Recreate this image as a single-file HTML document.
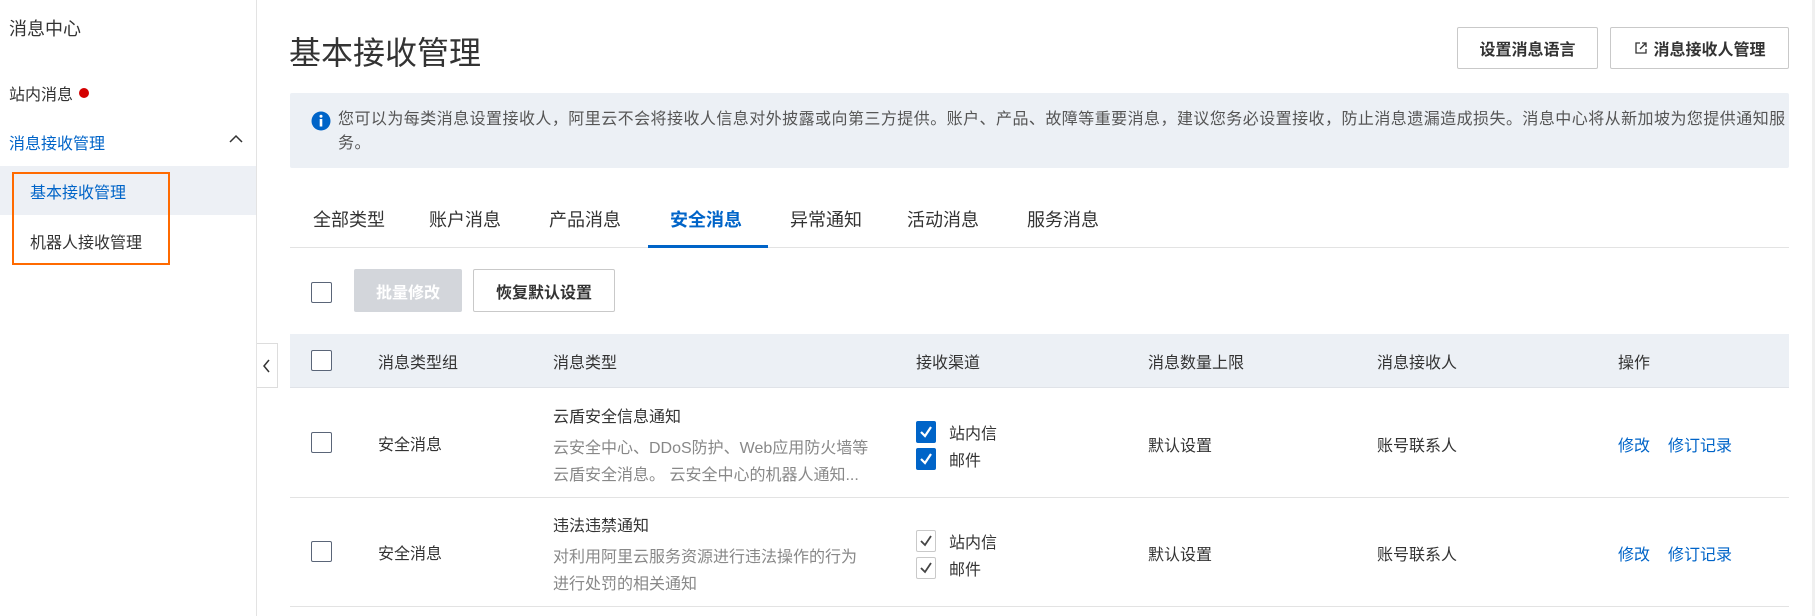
<!DOCTYPE html>
<html><head><meta charset="utf-8"><style>
*{margin:0;padding:0;box-sizing:border-box}
body{width:1815px;height:616px;overflow:hidden;background:#fff;font-family:"Liberation Sans","Noto Sans CJK SC",sans-serif;color:#333;position:relative;font-size:16px}
.a{position:absolute;white-space:nowrap}
.side{position:absolute;left:0;top:0;width:257px;height:616px;border-right:1px solid #e3e3e3;background:#fff}
.btn{position:absolute;border:1px solid #c9c9c9;border-radius:2px;background:#fff;font-size:16px;font-weight:bold;color:#333;display:flex;align-items:center;justify-content:center}
.cb{position:absolute;width:21px;height:21px;border:1.5px solid #5a6578;border-radius:2px;background:#fff}
.ck{position:absolute;width:20px;height:22px;border-radius:2px;background:#0064c8}
.ckg{position:absolute;width:20px;height:22px;border-radius:2px;border:1px solid #c9c9c9;background:#fff}
.blue{color:#0064c8}
.gray{color:#888}
</style></head><body>
<div class="side">
  <div class="a" style="left:9px;top:15px;font-size:18px;color:#333">消息中心</div>
  <div class="a" style="left:9px;top:81px;font-size:16px">站内消息</div>
  <div class="a" style="left:79px;top:88px;width:10px;height:10px;border-radius:50%;background:#d40000"></div>
  <div class="a blue" style="left:9px;top:130px;font-size:16px">消息接收管理</div>
  <svg class="a" style="left:228px;top:133px" width="16" height="12"><path d="M2 9 L8 3 L14 9" fill="none" stroke="#333" stroke-width="1.5"/></svg>
  <div class="a" style="left:0;top:166px;width:256px;height:49px;background:#edf0f5"></div>
  <div class="a blue" style="left:30px;top:179px;font-size:16px">基本接收管理</div>
  <div class="a" style="left:30px;top:229px;font-size:16px">机器人接收管理</div>
  <div class="a" style="left:12px;top:172px;width:158px;height:93px;border:2px solid #ff6a00"></div>
</div>
<div class="a" style="left:257px;top:343px;width:21px;height:45px;border:1px solid #ddd;border-left:none;background:#fff"></div>
<svg class="a" style="left:262px;top:359px" width="10" height="14"><path d="M7 1 L2 7 L7 13" fill="none" stroke="#333" stroke-width="1.5"/></svg>

<div class="a" style="left:289px;top:28px;font-size:32px;color:#333">基本接收管理</div>
<div class="btn" style="left:1457px;top:27px;width:141px;height:42px">设置消息语言</div>
<div class="btn" style="left:1610px;top:27px;width:179px;height:42px"><svg width="16" height="16" style="margin-right:4px"><path d="M7 3 H3 V13 H13 V9 M9 3 H13 V7 M13 3 L7 9" fill="none" stroke="#333" stroke-width="1.3"/></svg>消息接收人管理</div>

<div class="a" style="left:290px;top:93px;width:1499px;height:75px;background:#ecf0f5;border-radius:2px"></div>
<svg class="a" style="left:311px;top:111px" width="20" height="20"><circle cx="10" cy="10" r="9.5" fill="#0064c8"/><rect x="8.7" y="8" width="2.6" height="7.5" fill="#fff"/><circle cx="10" cy="5.3" r="1.5" fill="#fff"/></svg>
<div class="a" style="left:338px;top:108px;font-size:16px;line-height:24px;color:#555;letter-spacing:0.45px">您可以为每类消息设置接收人，阿里云不会将接收人信息对外披露或向第三方提供。账户、产品、故障等重要消息，建议您务必设置接收，防止消息遗漏造成损失。消息中心将从新加坡为您提供通知服<br>务。</div>

<div class="a" style="left:290px;top:247px;width:1499px;height:1px;background:#e3e3e3"></div>
<div class="a" style="left:313px;top:206px;font-size:18px">全部类型</div>
<div class="a" style="left:429px;top:206px;font-size:18px">账户消息</div>
<div class="a" style="left:549px;top:206px;font-size:18px">产品消息</div>
<div class="a blue" style="left:670px;top:206px;font-size:18px;font-weight:bold">安全消息</div>
<div class="a" style="left:790px;top:206px;font-size:18px">异常通知</div>
<div class="a" style="left:907px;top:206px;font-size:18px">活动消息</div>
<div class="a" style="left:1027px;top:206px;font-size:18px">服务消息</div>
<div class="a" style="left:648px;top:245px;width:120px;height:3px;background:#0064c8"></div>

<div class="cb" style="left:311px;top:282px"></div>
<div class="a" style="left:354px;top:269px;width:108px;height:43px;background:#d3d6db;border-radius:2px;color:#fff;font-weight:bold;display:flex;align-items:center;justify-content:center">批量修改</div>
<div class="btn" style="left:473px;top:269px;width:142px;height:43px">恢复默认设置</div>

<div class="a" style="left:290px;top:334px;width:1499px;height:54px;background:#ecf0f5;border-bottom:1px solid #e0e3e8"></div>
<div class="cb" style="left:311px;top:350px"></div>
<div class="a" style="left:378px;top:349px">消息类型组</div>
<div class="a" style="left:553px;top:349px">消息类型</div>
<div class="a" style="left:916px;top:349px">接收渠道</div>
<div class="a" style="left:1148px;top:349px">消息数量上限</div>
<div class="a" style="left:1377px;top:349px">消息接收人</div>
<div class="a" style="left:1618px;top:349px">操作</div>

<!-- row1 -->
<div class="cb" style="left:311px;top:432px"></div>
<div class="a" style="left:378px;top:431px">安全消息</div>
<div class="a" style="left:553px;top:403px">云盾安全信息通知</div>
<div class="a gray" style="left:553px;top:434px">云安全中心、DDoS防护、Web应用防火墙等</div>
<div class="a gray" style="left:553px;top:461px">云盾安全消息。 云安全中心的机器人通知...</div>
<div class="ck" style="left:916px;top:421px"><svg width="20" height="22"><path d="M5 11 L9 15 L15 6" fill="none" stroke="#fff" stroke-width="2.2"/></svg></div>
<div class="ck" style="left:916px;top:448px"><svg width="20" height="22"><path d="M5 11 L9 15 L15 6" fill="none" stroke="#fff" stroke-width="2.2"/></svg></div>
<div class="a" style="left:949px;top:420px">站内信</div>
<div class="a" style="left:949px;top:447px">邮件</div>
<div class="a" style="left:1148px;top:432px">默认设置</div>
<div class="a" style="left:1377px;top:432px">账号联系人</div>
<div class="a blue" style="left:1618px;top:432px">修改</div>
<div class="a blue" style="left:1668px;top:432px">修订记录</div>
<div class="a" style="left:290px;top:497px;width:1499px;height:1px;background:#e3e3e3"></div>

<!-- row2 -->
<div class="cb" style="left:311px;top:541px"></div>
<div class="a" style="left:378px;top:540px">安全消息</div>
<div class="a" style="left:553px;top:512px">违法违禁通知</div>
<div class="a gray" style="left:553px;top:543px">对利用阿里云服务资源进行违法操作的行为</div>
<div class="a gray" style="left:553px;top:570px">进行处罚的相关通知</div>
<div class="ckg" style="left:916px;top:530px"><svg width="18" height="20"><path d="M4 10 L8 14 L14 5" fill="none" stroke="#444" stroke-width="1.8"/></svg></div>
<div class="ckg" style="left:916px;top:557px"><svg width="18" height="20"><path d="M4 10 L8 14 L14 5" fill="none" stroke="#444" stroke-width="1.8"/></svg></div>
<div class="a" style="left:949px;top:529px">站内信</div>
<div class="a" style="left:949px;top:556px">邮件</div>
<div class="a" style="left:1148px;top:541px">默认设置</div>
<div class="a" style="left:1377px;top:541px">账号联系人</div>
<div class="a blue" style="left:1618px;top:541px">修改</div>
<div class="a blue" style="left:1668px;top:541px">修订记录</div>
<div class="a" style="left:290px;top:606px;width:1499px;height:1px;background:#e3e3e3"></div>
<div class="a" style="left:1812px;top:0;width:3px;height:616px;background:#f0f0f0"></div>
</body></html>
